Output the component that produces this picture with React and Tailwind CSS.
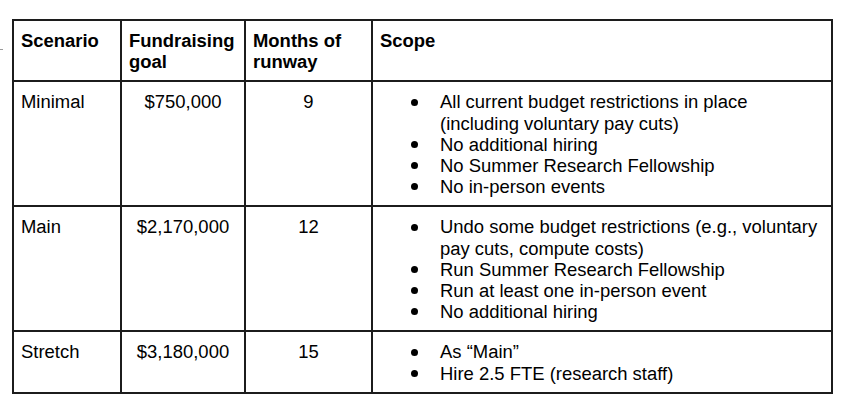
import React from "react";

const rows = [
  {
    name: "Minimal",
    goal: "$750,000",
    months: "9",
    scope: [
      ["All current budget restrictions in place", "(including voluntary pay cuts)"],
      ["No additional hiring"],
      ["No Summer Research Fellowship"],
      ["No in-person events"],
    ],
  },
  {
    name: "Main",
    goal: "$2,170,000",
    months: "12",
    scope: [
      ["Undo some budget restrictions (e.g., voluntary", "pay cuts, compute costs)"],
      ["Run Summer Research Fellowship"],
      ["Run at least one in-person event"],
      ["No additional hiring"],
    ],
  },
  {
    name: "Stretch",
    goal: "$3,180,000",
    months: "15",
    scope: [["As \u201CMain\u201D"], ["Hire 2.5 FTE (research staff)"]],
  },
];

const cell = "border-r-2 border-b-2 border-[#1c1c1c] pt-[9px] pb-[8px] px-[7px]";

export default function App() {
  return (
    <div
      className="w-[850px] h-[415px] bg-white text-black flex items-start"
      style={{ fontFamily: '"Liberation Sans", Arial, sans-serif' }}
    >
      <div className="mt-[49px] w-[3px] h-[1px] bg-[#9a9a9a]" />
      <div className="ml-[9px] mt-[19px] border-l-2 border-t-2 border-[#1c1c1c] grid grid-cols-[108px_124px_127px_460px] text-[18.45px] leading-[21.2px]">
        <div className={`${cell} font-bold`}>Scenario</div>
        <div className={`${cell} font-bold`}>
          Fundraising
          <br />
          goal
        </div>
        <div className={`${cell} font-bold`}>
          Months of
          <br />
          runway
        </div>
        <div className={`${cell} font-bold`}>Scope</div>
        {rows.map((r) => (
          <React.Fragment key={r.name}>
            <div className={cell}>{r.name}</div>
            <div className={`${cell} text-center`}>{r.goal}</div>
            <div className={`${cell} text-center`}>{r.months}</div>
            <div className={cell}>
              <ul className="pl-[31px] flex flex-col">
                {r.scope.map((lines, i) => (
                  <li key={i} className="flex items-start">
                    <span className="w-[29px] h-[21.2px] flex items-center shrink-0">
                      <span className="w-[7px] h-[7px] rounded-full bg-black" />
                    </span>
                    <span className="whitespace-nowrap">
                      {lines.map((l, j) => (
                        <React.Fragment key={j}>
                          {j > 0 && <br />}
                          {l}
                        </React.Fragment>
                      ))}
                    </span>
                  </li>
                ))}
              </ul>
            </div>
          </React.Fragment>
        ))}
      </div>
    </div>
  );
}
